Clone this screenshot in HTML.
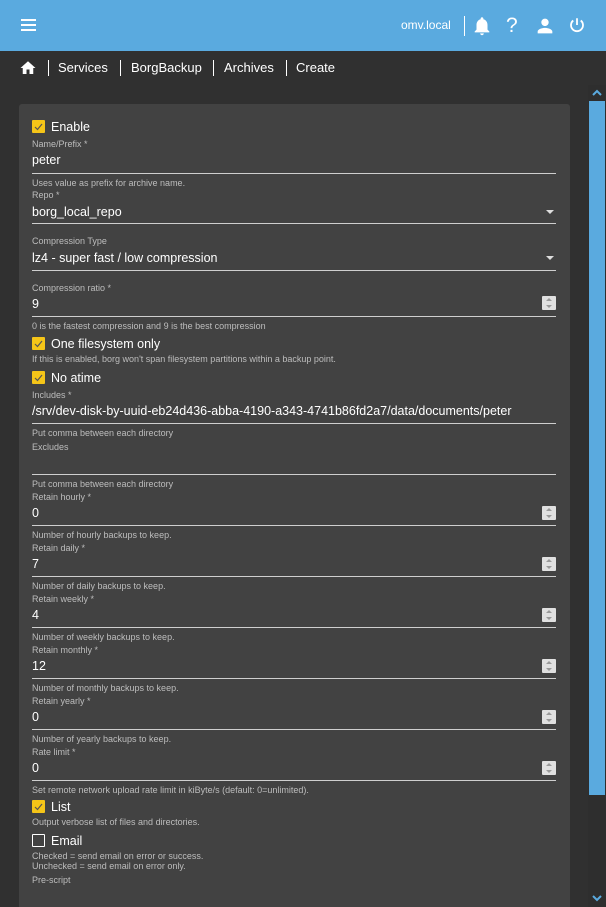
<!DOCTYPE html><html style="width:606px;height:907px;overflow:hidden"><head><style>
*{margin:0;padding:0;box-sizing:border-box}
body{width:606px;height:907px;overflow:hidden;background:#303030;font-family:"Liberation Sans",sans-serif;color:#fff;position:relative}
.a{position:absolute;white-space:nowrap}
.hd{left:0;top:0;width:606px;height:51px;background:#5aaadf}
.card{left:19px;top:104px;width:551px;height:803px;background:#424242;border-radius:3px 3px 0 0}
.lab{font-size:9px;color:#bdbdbd;left:32px}
.val{font-size:12.5px;color:#fff;left:32px}
.ul{left:32px;width:524px;height:1px;background:#cfcfcf}
.cb{left:32px;width:13px;height:13px;background:#f5c518;border-radius:1px}
.cb svg{position:absolute;left:1px;top:1px}
.cbt{left:51px;font-size:12.5px}
.sp{left:542px;width:14px;height:14px;background:#e0e0e0;border-radius:1px}
.sp:before{content:"";position:absolute;left:4px;top:2px;border-left:3px solid transparent;border-right:3px solid transparent;border-bottom:3px solid #999}
.sp:after{content:"";position:absolute;left:4px;top:9px;border-left:3px solid transparent;border-right:3px solid transparent;border-top:3px solid #999}
.arr{left:546px;width:0;height:0;border-left:4px solid transparent;border-right:4px solid transparent;border-top:4px solid #ddd}
</style></head><body>
<div class="a hd"></div>
<div class="a" style="left:21px;top:19px;width:15px;height:2px;background:#fff;box-shadow:0 5px 0 #fff,0 10px 0 #fff"></div>
<div class="a" style="left:401px;top:18px;font-size:12px">omv.local</div>
<div class="a" style="left:464px;top:16px;width:1px;height:20px;background:#fff"></div>
<svg class="a" style="left:471px;top:14px" width="22" height="24" viewBox="0 0 24 24"><path fill="#fff" d="M12 22c1.1 0 2-.9 2-2h-4c0 1.1.9 2 2 2zm6-6v-5c0-3.07-1.64-5.64-4.5-6.32V4c0-.83-.67-1.5-1.5-1.5s-1.5.67-1.5 1.5v.68C7.63 5.36 6 7.92 6 11v5l-2 2v1h16v-1l-2-2z"/></svg>
<div class="a" style="left:506px;top:14px;font-size:21px">?</div>
<svg class="a" style="left:534px;top:15px" width="22" height="22" viewBox="0 0 24 24"><path fill="#fff" d="M12 12c2.21 0 4-1.79 4-4s-1.79-4-4-4-4 1.79-4 4 1.79 4 4 4zm0 2c-2.67 0-8 1.34-8 4v2h16v-2c0-2.66-5.33-4-8-4z"/></svg>
<svg class="a" style="left:568px;top:16px" width="18" height="18" viewBox="0 0 24 24"><path fill="none" stroke="#fff" stroke-width="2.4" d="M12 3v9M7 6a8 8 0 1 0 10 0"/></svg>
<svg class="a" style="left:19px;top:59px" width="18" height="18" viewBox="0 0 24 24"><path fill="#fff" d="M10 20v-6h4v6h5v-8h3L12 3 2 12h3v8z"/></svg>
<div class="a" style="left:48px;top:60px;width:1px;height:16px;background:#fff"></div>
<div class="a" style="left:58px;top:60px;font-size:13px">Services</div>
<div class="a" style="left:120px;top:60px;width:1px;height:16px;background:#fff"></div>
<div class="a" style="left:131px;top:60px;font-size:13px">BorgBackup</div>
<div class="a" style="left:213px;top:60px;width:1px;height:16px;background:#fff"></div>
<div class="a" style="left:224px;top:60px;font-size:13px">Archives</div>
<div class="a" style="left:286px;top:60px;width:1px;height:16px;background:#fff"></div>
<div class="a" style="left:296px;top:60px;font-size:13px">Create</div>
<div class="a" style="left:588px;top:85px;width:18px;height:822px;background:#2e2e2e"></div>
<div class="a" style="left:589px;top:101px;width:16px;height:694px;background:#5aaadf"></div>
<svg class="a" style="left:592px;top:89px" width="10" height="8"><path d="M1 6l4-4 4 4" stroke="#5aaadf" stroke-width="2" fill="none"/></svg>
<svg class="a" style="left:592px;top:894px" width="10" height="8"><path d="M1 2l4 4 4-4" stroke="#5aaadf" stroke-width="2" fill="none"/></svg>
<div class="a card"></div>
<div class="a cb" style="top:120px"><svg width="11" height="11"><path d="M2 6l2.5 2.5L9 3" stroke="#555" stroke-width="1.2" fill="none"/></svg></div>
<div class="a cbt" style="top:120px">Enable</div>
<div class="a lab" style="top:139px">Name/Prefix *</div>
<div class="a val" style="top:153px">peter</div>
<div class="a ul" style="top:173px"></div>
<div class="a lab" style="top:178px">Uses value as prefix for archive name.</div>
<div class="a lab" style="top:190px">Repo *</div>
<div class="a val" style="top:205px">borg_local_repo</div>
<div class="a arr" style="top:210px"></div>
<div class="a ul" style="top:223px"></div>
<div class="a lab" style="top:236px">Compression Type</div>
<div class="a val" style="top:251px">lz4 - super fast / low compression</div>
<div class="a arr" style="top:256px"></div>
<div class="a ul" style="top:270px"></div>
<div class="a lab" style="top:283px">Compression ratio *</div>
<div class="a val" style="top:297px">9</div><div class="a sp" style="top:296px"></div>
<div class="a ul" style="top:316px"></div>
<div class="a lab" style="top:321px">0 is the fastest compression and 9 is the best compression</div>
<div class="a cb" style="top:337px"><svg width="11" height="11"><path d="M2 6l2.5 2.5L9 3" stroke="#555" stroke-width="1.2" fill="none"/></svg></div>
<div class="a cbt" style="top:337px">One filesystem only</div>
<div class="a lab" style="top:354px">If this is enabled, borg won't span filesystem partitions within a backup point.</div>
<div class="a cb" style="top:371px"><svg width="11" height="11"><path d="M2 6l2.5 2.5L9 3" stroke="#555" stroke-width="1.2" fill="none"/></svg></div>
<div class="a cbt" style="top:371px">No atime</div>
<div class="a lab" style="top:390px">Includes *</div>
<div class="a val" style="top:404px">/srv/dev-disk-by-uuid-eb24d436-abba-4190-a343-4741b86fd2a7/data/documents/peter</div>
<div class="a ul" style="top:423px"></div>
<div class="a lab" style="top:428px">Put comma between each directory</div>
<div class="a lab" style="top:442px">Excludes</div>
<div class="a ul" style="top:474px"></div>
<div class="a lab" style="top:479px">Put comma between each directory</div>
<div class="a lab" style="top:492px">Retain hourly *</div>
<div class="a val" style="top:506px">0</div><div class="a sp" style="top:506px"></div>
<div class="a ul" style="top:525px"></div>
<div class="a lab" style="top:530px">Number of hourly backups to keep.</div>
<div class="a lab" style="top:543px">Retain daily *</div>
<div class="a val" style="top:557px">7</div><div class="a sp" style="top:557px"></div>
<div class="a ul" style="top:576px"></div>
<div class="a lab" style="top:581px">Number of daily backups to keep.</div>
<div class="a lab" style="top:594px">Retain weekly *</div>
<div class="a val" style="top:608px">4</div><div class="a sp" style="top:608px"></div>
<div class="a ul" style="top:627px"></div>
<div class="a lab" style="top:632px">Number of weekly backups to keep.</div>
<div class="a lab" style="top:645px">Retain monthly *</div>
<div class="a val" style="top:659px">12</div><div class="a sp" style="top:659px"></div>
<div class="a ul" style="top:678px"></div>
<div class="a lab" style="top:683px">Number of monthly backups to keep.</div>
<div class="a lab" style="top:696px">Retain yearly *</div>
<div class="a val" style="top:710px">0</div><div class="a sp" style="top:710px"></div>
<div class="a ul" style="top:729px"></div>
<div class="a lab" style="top:734px">Number of yearly backups to keep.</div>
<div class="a lab" style="top:747px">Rate limit *</div>
<div class="a val" style="top:761px">0</div><div class="a sp" style="top:761px"></div>
<div class="a ul" style="top:780px"></div>
<div class="a lab" style="top:785px">Set remote network upload rate limit in kiByte/s (default: 0=unlimited).</div>
<div class="a cb" style="top:800px"><svg width="11" height="11"><path d="M2 6l2.5 2.5L9 3" stroke="#555" stroke-width="1.2" fill="none"/></svg></div>
<div class="a cbt" style="top:800px">List</div>
<div class="a lab" style="top:817px">Output verbose list of files and directories.</div>
<div class="a" style="left:32px;top:834px;width:13px;height:13px;border:1.5px solid #fff;border-radius:1px"></div>
<div class="a cbt" style="top:834px">Email</div>
<div class="a lab" style="top:851px">Checked = send email on error or success.</div>
<div class="a lab" style="top:861px">Unchecked = send email on error only.</div>
<div class="a lab" style="top:875px">Pre-script</div>
</body></html>
